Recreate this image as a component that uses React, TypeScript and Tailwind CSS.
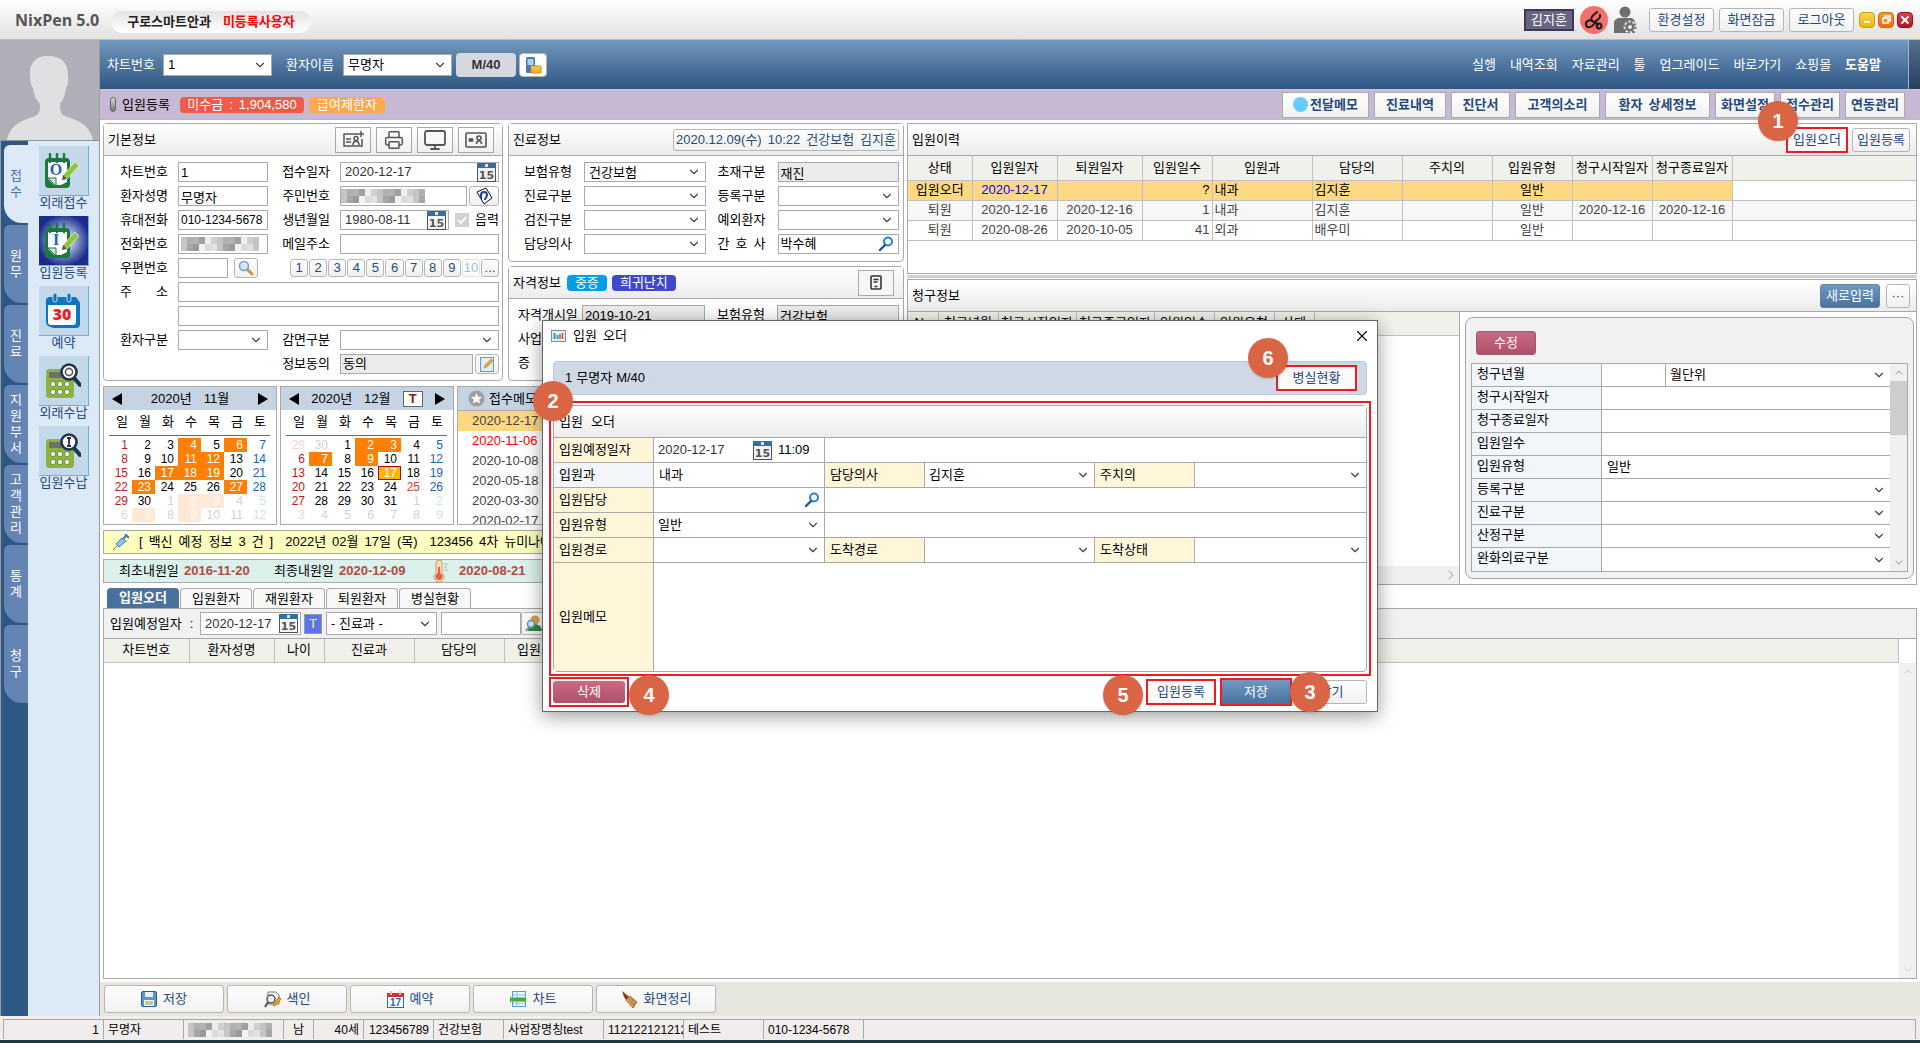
import { useId } from "react";
import type { ReactNode } from "react";
import { ChevronDown, ChevronRight, ChevronUp, Monitor, Printer, X } from "lucide-react";

const MOSAIC = ["#c4c4c4", "#9a9a9a", "#cfcfcf", "#a6a6a6", "#ededed", "#c6c6c6", "#a0a0a0", "#e2e2e2", "#b2b2b2", "#dadada", "#b0b0b0", "#f2f2f2"];

const SIDE_TABS = ["접수", "원무", "진료", "지원부서", "고객관리", "통계", "청구"];
const TOP_MENU = ["실행", "내역조회", "자료관리", "툴", "업그레이드", "바로가기", "쇼핑몰"];
const WEEK = ["일", "월", "화", "수", "목", "금", "토"];
const MEMO_DATES = ["2020-12-17", "2020-11-06", "2020-10-08", "2020-05-18", "2020-03-30", "2020-02-17"];

const HISTORY = [
    ["입원오더", "2020-12-17", "", "?", "내과", "김지훈", "", "일반", "", ""],
    ["퇴원", "2020-12-16", "2020-12-16", "1", "내과", "김지훈", "", "일반", "2020-12-16", "2020-12-16"],
    ["퇴원", "2020-08-26", "2020-10-05", "41", "외과", "배우미", "", "일반", "", ""],
];

const HISTORY_COLS = [
    { name: "상태", w: "w-[64px]" },
    { name: "입원일자", w: "w-[85px]" },
    { name: "퇴원일자", w: "w-[85px]" },
    { name: "입원일수", w: "w-[70px]" },
    { name: "입원과", w: "w-[100px]" },
    { name: "담당의", w: "w-[90px]" },
    { name: "주치의", w: "w-[90px]" },
    { name: "입원유형", w: "w-[80px]" },
    { name: "청구시작일자", w: "w-[80px]" },
    { name: "청구종료일자", w: "w-[80px]" },
];

const CLAIM_COLS = [
    { name: "No", w: "w-[30px]" },
    { name: "청구년월", w: "w-[60px]" },
    { name: "청구시작일자", w: "w-[78px]" },
    { name: "청구종료일자", w: "w-[78px]" },
    { name: "입원일수", w: "w-[60px]" },
    { name: "입원유형", w: "w-[60px]" },
    { name: "상태", w: "w-[40px]" },
];

const ORDER_COLS = [
    { name: "차트번호", w: "w-[85px]" },
    { name: "환자성명", w: "w-[85px]" },
    { name: "나이", w: "w-[50px]" },
    { name: "진료과", w: "w-[90px]" },
    { name: "담당의", w: "w-[90px]" },
    { name: "입원오더", w: "w-[74px]" },
];

function Mosaic({ count }: { count: number }) {
    return (
        <svg width={count * 6} height="14" className="shrink-0">
            {Array.from({ length: count * 2 }, (_, i) => (
                <rect key={i} x={Math.floor(i / 2) * 6} y={(i % 2) * 7} width="6" height="7" fill={MOSAIC[(i * 5) % 12]} />
            ))}
        </svg>
    );
}

function DateIcon() {
    return (
        <svg width="19" height="19" viewBox="0 0 19 19">
            <rect x="0.5" y="0.5" width="18" height="18" fill="#f4f4f4" stroke="#4a5560" />
            <rect x="0" y="0" width="19" height="5" fill="#2e6fa8" />
            <rect x="8" y="1" width="3" height="3" fill="#d8ecff" />
            <text x="9.5" y="16" textAnchor="middle" fontSize="11" fontWeight="700" fill="#555" fontFamily="DejaVu Sans">15</text>
        </svg>
    );
}

function Lens({ size = 16 }: { size?: number }) {
    return (
        <svg width={size} height={size} viewBox="0 0 16 16" fill="none">
            <circle cx="10" cy="5.5" r="4" stroke="#2f7fc4" strokeWidth="2" fill="#eaf5ff" />
            <path d="M7 9L2 14" stroke="#1f4f9a" strokeWidth="2.4" strokeLinecap="round" />
        </svg>
    );
}

function Field({ label, value = "", gray = false, small = false }: { label: ReactNode; value?: string; gray?: boolean; small?: boolean }) {
    const id = useId();
    return (
        <>
            <label htmlFor={id}>{label}</label>
            <div className={`flex h-5 min-w-0 items-center border border-[#a9a9a9] ${gray ? "bg-[#ebebeb]" : "bg-white"}`}>
                <input id={id} defaultValue={value} readOnly={gray} className={`h-full w-full min-w-0 px-0.5 outline-none ${small ? "text-xs" : ""}`} />
            </div>
        </>
    );
}

function DateBox({ id, value }: { id: string; value: string }) {
    return (
        <div className="flex h-full min-w-0 flex-1 items-center border border-[#a9a9a9] bg-white pl-1">
            <input id={id} defaultValue={value} className="w-full min-w-0 text-[#333] outline-none" />
            <button aria-label="달력" className="mr-0.5 shrink-0"><DateIcon /></button>
        </div>
    );
}

function SelectBox({ id, value = "", name, border = true }: { id?: string; value?: string; name?: string; border?: boolean }) {
    return (
        <div className={`relative h-full min-w-0 flex-1 bg-white ${border ? "border border-[#a9a9a9]" : ""}`}>
            <select id={id} aria-label={name} className="h-full w-full appearance-none bg-transparent pl-1 outline-none">
                <option>{value}</option>
            </select>
            <ChevronDown className="pointer-events-none absolute right-1 top-1/2 h-3.5 w-3.5 -translate-y-1/2 text-[#444]" />
        </div>
    );
}

function SelectField({ label, value }: { label: string; value?: string }) {
    const id = useId();
    return (
        <>
            <label htmlFor={id}>{label}</label>
            <div className="flex h-5 min-w-0"><SelectBox id={id} value={value} /></div>
        </>
    );
}

function PanelHead({ title, children }: { title: string; children?: ReactNode }) {
    return (
        <div className="flex h-8 shrink-0 items-center border-b border-[#a9a9a9] bg-linear-to-b from-white to-[#ececec] pl-1">
            <h2>{title}</h2>
            {children}
        </div>
    );
}

function Marker({ n, place }: { n: number; place: string }) {
    return (
        <span className={`absolute z-20 flex h-10 w-10 items-center justify-center rounded-full bg-[#d96544] text-xl font-bold text-white shadow-sm ${place}`}>
            {n}
        </span>
    );
}

function PlainButton({ children, label, className = "" }: { children: ReactNode; label?: string; className?: string }) {
    return (
        <button aria-label={label} className={`flex items-center justify-center whitespace-nowrap rounded-[3px] border border-[#b5b5b5] bg-linear-to-b from-white to-[#f0f0f0] text-[#24497c] ${className}`}>
            {children}
        </button>
    );
}

function SideIcon({ kind }: { kind: string }) {
    if (kind === "30") {
        return (
            <svg width="36" height="36" viewBox="0 0 36 36">
                <rect x="5" y="7" width="30" height="28" rx="4" fill="#0b76bd" />
                <rect x="2" y="5" width="30" height="28" rx="4" fill="#fff" stroke="#0b76bd" strokeWidth="2" />
                <path d="M1 12V8a4 4 0 0 1 4-4h24a4 4 0 0 1 4 4v4z" fill="#0b76bd" />
                <rect x="8" y="0" width="4" height="9" rx="2" fill="#0b76bd" stroke="#c5d9ea" />
                <rect x="22" y="0" width="4" height="9" rx="2" fill="#0b76bd" stroke="#c5d9ea" />
                <text x="17" y="27" textAnchor="middle" fontSize="16" fontWeight="800" fill="#ee1c25" fontFamily="Open Sans">30</text>
            </svg>
        );
    }
    if (kind === "calcO" || kind === "calcI") {
        return (
            <svg width="36" height="36" viewBox="0 0 36 36">
                <rect x="1" y="6" width="28" height="29" rx="3" fill="#8cb43c" />
                <rect x="4" y="9" width="18" height="6" fill="#6d6e71" />
                {[8, 15, 22].map((x) => (
                    <g key={x} fill="#fff" stroke="#55752a" strokeWidth="0.8">
                        <circle cx={x} cy="21" r="2.6" />
                        <circle cx={x} cy="29" r="2.6" />
                    </g>
                ))}
                <path d="M29 15L35 22" stroke="#1e3550" strokeWidth="4" strokeLinecap="round" />
                <circle cx="24" cy="9" r="7.5" fill="#fff" stroke="#1e3550" strokeWidth="2.6" />
                {kind === "calcO" ? <circle cx="24" cy="9" r="3.6" fill="none" stroke="#555" strokeWidth="1.6" /> : <path d="M22 5h4M24 5v8M22 13h4" stroke="#333" strokeWidth="1.8" />}
            </svg>
        );
    }
    return (
        <svg width="38" height="36" viewBox="0 0 38 36">
            <rect x="1" y="5" width="25" height="30" rx="4" fill="#1a7a3c" />
            <path d="M4 9h19v20l-6 3H10l-6-6z" fill="#fff" />
            <path d="M4 25l8 8V25z" fill="#cfe6d5" stroke="#1a7a3c" />
            {[6, 13, 20].map((x) => <path key={x} d={`M${x} 1v8`} stroke="#1a7a3c" strokeWidth="2.4" strokeLinecap="round" />)}
            <path d="M19 22L31 9l4 4L23 26l-5 1z" fill="#8dc63f" stroke="#fff" strokeWidth="0.6" />
            <path d="M19 22l4 4-5 1z" fill="#555" />
            <text x="12" y="22" textAnchor="middle" fontSize="16" fontWeight="700" fill="#1c63b7" fontFamily="Liberation Serif">{kind}</text>
        </svg>
    );
}

const SIDE_ICONS = [
    { label: "외래접수", kind: "O" },
    { label: "입원등록", kind: "I" },
    { label: "예약", kind: "30" },
    { label: "외래수납", kind: "calcO" },
    { label: "입원수납", kind: "calcI" },
];

function TitleBar() {
    return (
        <header className="flex h-10 items-center border-b border-[#bdbdbd] bg-linear-to-b from-white to-[#e3e1de] px-[7px]">
            <h1 className="pl-2 font-['Open_Sans',sans-serif] text-base font-bold text-[#55555a]">NixPen 5.0</h1>
            <div className="ml-3 mt-1 flex h-[22px] items-center gap-3 rounded-full bg-linear-to-b from-[#e6e3e2] to-white px-4 font-bold">
                <span className="text-[#222]">구로스마트안과</span>
                <span className="text-[#f00]">미등록사용자</span>
            </div>
            <div className="ml-auto flex items-center gap-[5px]">
                <span className="flex h-[22px] w-[50px] items-center justify-center border-2 border-[#3c3859] bg-[#686580] text-white">김지훈</span>
                <svg width="28" height="28" viewBox="0 0 28 28" className="ml-px">
                    <circle cx="14" cy="14" r="14" fill="#f4706c" />
                    <g fill="none" stroke="#1c1c1c" strokeWidth="2" strokeLinecap="round">
                        <path d="M17 6l-1 1c-3 2-6 5-4 8 2 2 6-1 8-4l0-2" />
                        <path d="M12 15c-3-2-7 1-6 4 1 4 6 2 8-1 2-2 3-1 4 1" />
                        <circle cx="19" cy="20" r="2.4" />
                    </g>
                </svg>
                <svg width="24" height="28" viewBox="0 0 24 28">
                    <circle cx="12" cy="6" r="5.5" fill="#6e6e6e" />
                    <path d="M1 27V17c0-3 3-5 6-5h10c3 0 5 2 5 5v10z" fill="#6e6e6e" />
                    <circle cx="17" cy="21" r="6.500" fill="#ebeae8" />
                    <circle cx="17" cy="21" r="5.500" fill="none" stroke="#6e6e6e" strokeWidth="2" strokeDasharray="2 2.300" />
                    <circle cx="17" cy="21" r="3.300" fill="none" stroke="#6e6e6e" strokeWidth="2.400" />
                </svg>
                <PlainButton className="ml-[7px] h-6 w-[65px]">환경설정</PlainButton>
                <PlainButton className="h-6 w-[65px]">화면잠금</PlainButton>
                <PlainButton className="h-6 w-[65px]">로그아웃</PlainButton>
                <div className="flex gap-[3px]">
                    <button aria-label="최소화" className="flex h-4 w-4 items-end justify-center rounded-sm border border-[#c8a014] bg-linear-to-b from-[#f2d64b] to-[#f5b400] pb-1"><span className="h-0.5 w-1.5 bg-white" /></button>
                    <button aria-label="이전 크기" className="flex h-4 w-4 items-center justify-center rounded-sm border border-[#c46a10] bg-linear-to-b from-[#f29a3b] to-[#f26a00]">
                        <svg width="9" height="9" viewBox="0 0 9 9" fill="none" stroke="#fff" strokeWidth="1.500"><path d="M3 3V1h5v5H6" /><rect x="1" y="3" width="5" height="5" /></svg>
                    </button>
                    <button aria-label="종료" className="flex h-4 w-4 items-center justify-center rounded-sm border border-[#8e1420] bg-linear-to-b from-[#d94450] to-[#b8101f] text-white"><X className="h-3 w-3" strokeWidth={4} /></button>
                </div>
            </div>
        </header>
    );
}

function Sidebar() {
    return (
        <aside className="flex w-[100px] shrink-0 flex-col border-r border-[#9b9ba0] bg-[#dce9f6]">
            <svg viewBox="0 0 99 100" className="w-full border-b border-[#909095] bg-[#afafb7]">
                <path d="M47 16c-12 0-18 8-17 20 0 6 1 9 3 12 1 9 4 13 7 16 0 8-1 10-5 12-14 5-25 9-28 24h86c-3-15-14-19-28-24-4-2-5-4-5-12 3-4 5-8 6-16 2-3 3-7 2-12 0-12-5-20-21-20z" fill="#e0e0e2" />
            </svg>
            <div className="flex flex-1">
                <nav className="flex w-7 flex-col gap-0.5 border-l border-[#9a9a9a] bg-[#2f5784] pl-[3px] pt-1">
                    {SIDE_TABS.map((tab, i) => (
                        <button
                            key={tab}
                            className={`flex h-[78px] items-center justify-center rounded-bl-[18px] rounded-tl-md ${i === 0 ? "bg-[#dce9f6] text-[#4a77ac]" : "bg-[#6484b3] text-white"}`}
                        >
                            <span className="w-[13px] break-all leading-4">{tab}</span>
                        </button>
                    ))}
                </nav>
                <div className="flex flex-1 flex-col items-center pt-[5px]">
                    {SIDE_ICONS.map((item, i) => (
                        <button key={item.label} className="flex h-[70px] w-[54px] flex-col items-center text-[#24497c]">
                            <span className={`flex h-[50px] w-[50px] items-center justify-center border-b border-r border-[#6db0e0] ${i === 1 ? "bg-radial from-[#eef0ff] from-10% to-[#1d2a8c] to-75%" : "bg-[#c3d9ea]"}`}>
                                <SideIcon kind={item.kind} />
                            </span>
                            <span className="leading-[14px]">{item.label}</span>
                        </button>
                    ))}
                </div>
            </div>
        </aside>
    );
}

function PatientBar() {
    return (
        <div className="flex h-[50px] items-center border-b border-[#c9c9d4] bg-linear-to-b from-[#7399bf] to-[#2f5583] pl-[7px] text-white">
            <label htmlFor="top-chart" className="w-14">차트번호</label>
            <div className="flex h-[22px] w-[109px] text-black"><SelectBox id="top-chart" value="1" /></div>
            <label htmlFor="top-name" className="ml-[14px] w-[57px]">환자이름</label>
            <div className="flex h-[22px] w-[109px] text-black"><SelectBox id="top-name" value="무명자" /></div>
            <span className="ml-1 flex h-6 w-[60px] items-center justify-center rounded-sm bg-[#d5d8df] font-bold text-[#333]">M/40</span>
            <button aria-label="문자 전송" className="ml-[3px] flex h-6 w-7 items-center justify-center rounded-sm border border-[#b5b5b5] bg-white">
                <svg width="18" height="18" viewBox="0 0 18 18">
                    <rect x="2" y="1" width="9" height="16" rx="1.500" fill="#4a78b0" />
                    <rect x="3.500" y="3" width="6" height="6" fill="#a9d3f5" />
                    <rect x="7" y="10" width="10" height="7" fill="#f9b52c" stroke="#d98e0d" />
                    <path d="M7 10l5 3 5-3" fill="none" stroke="#fbd98a" />
                </svg>
            </button>
            <nav className="ml-auto flex gap-[14px] pr-[27px]">
                {TOP_MENU.map((m) => <a key={m} href="#">{m}</a>)}
                <a href="#" className="font-bold">도움말</a>
            </nav>
            <span className="h-full w-3 border-l border-[#9fb4cc] bg-linear-to-b from-[#56718d] to-[#24405f]" />
        </div>
    );
}

function StatusRow() {
    const btn = "flex h-[26px] items-center justify-center whitespace-nowrap border border-[#a9a9a9] bg-linear-to-b from-white to-[#f0f0f0] font-bold text-[#24497c]";
    return (
        <div className="flex h-[30px] items-center border-b border-[#c0b4c6] bg-[#c7b8d4] pl-[10px] pr-[15px]">
            <span className="h-[15px] w-1.5 rounded-full border border-[#666] bg-linear-to-b from-[#ddd] to-[#777]" />
            <span className="ml-1.5 w-[58px]">입원등록</span>
            <span className="flex h-4 w-[124px] items-center justify-center gap-1.5 rounded-sm bg-[#ee5b49] text-white"><span>미수금</span><span>:</span><span>1,904,580</span></span>
            <span className="ml-[5px] flex h-4 w-[76px] items-center justify-center rounded-sm bg-[#fea94b] text-white">급여제한자</span>
            <div className="ml-auto flex gap-[5px]">
                <button className={`${btn} w-[87px] gap-0.5`}><span className="h-[15px] w-[15px] rounded-full bg-[#64ccff]" />전달메모</button>
                <button className={`${btn} w-[72px]`}>진료내역</button>
                <button className={`${btn} w-[59px]`}>진단서</button>
                <button className={`${btn} w-[85px]`}>고객의소리</button>
                <button className={`${btn} w-[105px] gap-1.5`}><span>환자</span><span>상세정보</span></button>
                <button className={`${btn} w-[60px]`}>화면설정</button>
                <button className={`${btn} w-[60px]`}>접수관리</button>
                <button className={`${btn} w-[60px]`}>연동관리</button>
            </div>
        </div>
    );
}

function BasicInfo() {
    const tool = "flex h-[26px] w-9 items-center justify-center border border-[#a9a9a9] bg-linear-to-b from-white to-[#f0f0f0] text-[#555]";
    return (
        <section className="w-[400px] shrink-0 rounded-sm border border-[#a9a9a9] bg-white">
            <PanelHead title="기본정보">
                <div className="ml-auto flex gap-[5px] pr-2">
                    <button aria-label="환자 추가" className={tool}>
                        <svg width="22" height="20" viewBox="0 0 22 20" fill="none" stroke="currentColor" strokeWidth="1.500"><path d="M16 4H2v12h18V9M4 9h5M4 12h5M19 1v6M16 4h6" /><circle cx="14" cy="8.500" r="2" /><path d="M11 15c0-5 6-5 6 0" /></svg>
                    </button>
                    <button aria-label="인쇄" className={tool}><Printer className="h-5 w-5" strokeWidth={1.8} /></button>
                    <button aria-label="모니터" className={tool}><Monitor className="h-6 w-6" strokeWidth={1.8} /></button>
                    <button aria-label="신분증" className={tool}>
                        <svg width="22" height="18" viewBox="0 0 22 18" fill="none" stroke="currentColor" strokeWidth="1.600"><rect x="1" y="2" width="20" height="14" rx="1" /><rect x="4.500" y="8" width="3" height="2" fill="currentColor" /><circle cx="14" cy="7" r="2" /><path d="M11.500 13c0-4 5-4 5 0" /></svg>
                    </button>
                </div>
            </PanelHead>
            <div className="grid grid-cols-[48px_90px_52px_minmax(0,1fr)] gap-x-2.5 gap-y-1 whitespace-nowrap pb-1.5 pl-4 pr-[3px] pt-1.5 [&>label]:text-right">
                <Field label="차트번호" value="1" />
                <label htmlFor="recv-date">접수일자</label>
                <div className="flex h-5"><DateBox id="recv-date" value="2020-12-17" /></div>

                <Field label="환자성명" value="무명자" />
                <span className="text-right">주민번호</span>
                <div className="flex h-5 gap-0.5">
                    <div className="flex min-w-0 flex-1 items-center border border-[#a9a9a9] bg-white"><Mosaic count={14} /></div>
                    <PlainButton label="주민번호 조회" className="w-[30px]">
                        <svg width="18" height="18" viewBox="0 0 18 18"><path d="M2 5l9-4 6 10-8 6z" fill="#f2f6ff" stroke="#111" /><path d="M6 12V8a3 3 0 0 1 6 0c0 2-2 3-2 5" fill="none" stroke="#1d3fa0" strokeWidth="2" /></svg>
                    </PlainButton>
                </div>

                <Field label="휴대전화" value="010-1234-5678" small />
                <label htmlFor="birth">생년월일</label>
                <div className="flex h-5 items-center gap-1.5">
                    <DateBox id="birth" value="1980-08-11" />
                    <label className="flex items-center gap-1.5">
                        <span className="relative flex h-3.5 w-3.5">
                            <input type="checkbox" defaultChecked disabled className="h-3.5 w-3.5 appearance-none bg-[#d2d2d2]" />
                            <svg viewBox="0 0 14 14" className="pointer-events-none absolute inset-0 h-3.5 w-3.5" fill="none" stroke="#fff" strokeWidth="1.800"><path d="M3 7l3 3 5-6" /></svg>
                        </span>
                        음력
                    </label>
                </div>

                <span className="text-right">전화번호</span>
                <div className="flex h-5 items-center border border-[#a9a9a9] bg-white pl-0.5"><Mosaic count={13} /></div>
                <Field label="메일주소" />

                <label htmlFor="zip">우편번호</label>
                <div className="flex h-5 gap-1.5">
                    <input id="zip" className="h-5 w-[50px] border border-[#a9a9a9] bg-white" />
                    <PlainButton label="우편번호 검색" className="w-6">
                        <svg width="16" height="16" viewBox="0 0 16 16"><path d="M9 9l5 5" stroke="#e0922c" strokeWidth="3" strokeLinecap="round" /><circle cx="6" cy="6" r="4.500" fill="#cfe8fb" stroke="#7f9fc0" strokeWidth="1.600" /></svg>
                    </PlainButton>
                </div>
                <div className="col-span-2 flex h-5 items-center gap-px pl-3">
                    {["1", "2", "3", "4", "5", "6", "7", "8", "9", "10", "..."].map((n) => (
                        <PlainButton key={n} className={`h-[18px] min-w-0 flex-1 ${n === "10" ? "opacity-40" : ""}`}>{n}</PlainButton>
                    ))}
                </div>

                <label htmlFor="addr1" className="flex justify-between"><span>주</span><span>소</span></label>
                <input id="addr1" className="col-span-3 h-5 border border-[#a9a9a9] bg-white" />
                <span />
                <input aria-label="상세 주소" className="col-span-3 h-5 border border-[#a9a9a9] bg-white" />

                <SelectField label="환자구분" />
                <SelectField label="감면구분" />

                <label htmlFor="agree" className="col-start-3">정보동의</label>
                <div className="flex h-5 gap-0.5">
                    <input id="agree" readOnly defaultValue="동의" className="min-w-0 flex-1 border border-[#a9a9a9] bg-[#ebebeb] px-0.5" />
                    <PlainButton label="동의 수정" className="w-6">
                        <svg width="14" height="15" viewBox="0 0 14 15"><rect x="0.5" y="0.5" width="13" height="14" fill="#dceeff" stroke="#5a9bd5" /><path d="M4 11l1-3 6-6 2 2-6 6z" fill="#f7a823" stroke="#c57a12" strokeWidth="0.600" /></svg>
                    </PlainButton>
                </div>
            </div>
        </section>
    );
}

function MedicalInfo() {
    return (
        <div className="flex w-[396px] shrink-0 flex-col gap-1">
            <section className="rounded-sm border border-[#a9a9a9] bg-white">
                <PanelHead title="진료정보">
                    <PlainButton className="ml-auto mr-1 h-[22px] w-[226px] gap-1.5"><span>2020.12.09(수)</span><span>10:22</span><span>건강보험</span><span>김지훈</span></PlainButton>
                </PanelHead>
                <div className="grid grid-cols-[48px_minmax(0,1fr)_48px_minmax(0,1fr)] gap-x-3 gap-y-1 whitespace-nowrap pb-[7px] pl-[15px] pr-1 pt-1.5">
                    <SelectField label="보험유형" value="건강보험" />
                    <Field label="초재구분" value="재진" gray />
                    <SelectField label="진료구분" />
                    <SelectField label="등록구분" />
                    <SelectField label="검진구분" />
                    <SelectField label="예외환자" />
                    <SelectField label="담당의사" />
                    <label htmlFor="nurse" className="flex justify-between"><span>간</span><span>호</span><span>사</span></label>
                    <div className="flex h-5 items-center border border-[#a9a9a9]">
                        <input id="nurse" defaultValue="박수혜" className="w-full min-w-0 px-0.5 outline-none" />
                        <button aria-label="간호사 검색" className="mr-1"><Lens /></button>
                    </div>
                </div>
            </section>
            <section className="flex-1 rounded-sm border border-[#a9a9a9] bg-white">
                <PanelHead title="자격정보">
                    <span className="ml-1.5 flex h-4 w-10 items-center justify-center rounded-sm bg-[#009fe8] text-white">중증</span>
                    <span className="ml-[5px] flex h-4 w-16 items-center justify-center rounded-sm bg-[#3f48cc] text-white">희귀난치</span>
                    <button aria-label="자격 조회" className="ml-auto mr-[9px] flex h-[26px] w-9 items-center justify-center border border-[#a9a9a9] bg-[#f6f6f6]">
                        <svg width="12" height="15" viewBox="0 0 12 15" fill="none" stroke="#333" strokeWidth="1.600"><rect x="1" y="1" width="10" height="13" rx="1" /><path d="M3.500 4.500h5M3.500 7h4M4.500 11.500h3" /></svg>
                    </button>
                </PanelHead>
                <div className="flex gap-3 whitespace-nowrap pl-[9px] pr-1 pt-1.5">
                    <div className="grid flex-1 grid-cols-[60px_minmax(0,1fr)] content-start gap-x-1 gap-y-1">
                        <Field label="자격개시일" value="2019-10-21" gray />
                        <Field label="사업장명칭" gray />
                        <Field label={<span className="flex justify-between"><span>증</span><span>번</span><span>호</span></span>} gray />
                    </div>
                    <div className="grid w-[182px] grid-cols-[48px_minmax(0,1fr)] content-start gap-x-3 gap-y-1">
                        <Field label="보험유형" value="건강보험" gray />
                    </div>
                </div>
            </section>
        </div>
    );
}

type Month = { title: string; today?: string; weeks: string[][]; picked: string[]; faded: string[] };

// keys in picked / faded are "row-column" of the month grid
const NOVEMBER: Month = {
    title: "11월",
    weeks: [
        ["1", "2", "3", "4", "5", "6", "7"],
        ["8", "9", "10", "11", "12", "13", "14"],
        ["15", "16", "17", "18", "19", "20", "21"],
        ["22", "23", "24", "25", "26", "27", "28"],
        ["29", "30", "1", "2", "3", "4", "5"],
        ["6", "7", "8", "9", "10", "11", "12"],
    ],
    picked: ["0-3", "0-5", "1-3", "1-4", "2-2", "2-3", "2-4", "3-1", "3-5", "4-3", "4-4", "5-1", "5-3"],
    faded: ["4-2", "4-3", "4-4", "4-5", "4-6", "5-0", "5-1", "5-2", "5-3", "5-4", "5-5", "5-6"],
};

const DECEMBER: Month = {
    title: "12월",
    today: "2-4",
    weeks: [
        ["29", "30", "1", "2", "3", "4", "5"],
        ["6", "7", "8", "9", "10", "11", "12"],
        ["13", "14", "15", "16", "17", "18", "19"],
        ["20", "21", "22", "23", "24", "25", "26"],
        ["27", "28", "29", "30", "31", "1", "2"],
        ["3", "4", "5", "6", "7", "8", "9"],
    ],
    picked: ["0-3", "0-4", "1-1", "1-3"],
    faded: ["0-0", "0-1", "4-5", "4-6", "5-0", "5-1", "5-2", "5-3", "5-4", "5-5", "5-6"],
};

function dayClass(m: Month, key: string, col: number) {
    if (m.today === key) return "bg-[#ffb400] text-white outline outline-1 -outline-offset-1 outline-[#a01010]";
    const faded = m.faded.includes(key);
    if (m.picked.includes(key)) return faded ? "bg-[#ffe9d6] text-white" : "bg-[#ff8000] text-white";
    if (m === DECEMBER && key === "3-5") return "text-[#d8401c]";
    if (col === 0) return faded ? "text-[#f5d3d3]" : "text-[#c01818]";
    if (col === 6) return faded ? "text-[#cfe2f3]" : "text-[#1565b0]";
    return faded ? "text-[#d2d2d2]" : "text-black";
}

function Calendar({ month }: { month: Month }) {
    return (
        <section className="h-[139px] w-[174px] border border-[#a9a9a9] bg-white">
            <div className="flex h-[23px] items-center justify-between bg-[#c6d3e2] px-2">
                <button aria-label="이전 달" className="h-0 w-0 border-y-6 border-r-10 border-y-transparent border-r-black" />
                <div className="flex gap-3"><span>2020년</span><span>{month.title}</span></div>
                {month.today && <button className="h-4 w-5 border border-[#666] bg-white font-bold leading-[14px] text-[#7a1a1a]">T</button>}
                <button aria-label="다음 달" className="h-0 w-0 border-y-6 border-l-10 border-y-transparent border-l-black" />
            </div>
            <table className="mx-[5px] w-[161px] table-fixed border-collapse text-right text-xs leading-[14px]">
                <thead>
                    <tr className="h-[25px] border-b border-[#666] text-[13px]">{WEEK.map((d) => <th key={d} className="p-0 pr-1 font-normal">{d}</th>)}</tr>
                </thead>
                <tbody>
                    <tr className="h-[3px]"><td colSpan={7} className="h-[3px] p-0" /></tr>
                    {month.weeks.map((week, r) => (
                        <tr key={r} className="h-[14px]">
                            {week.map((d, c) => <td key={c} className={`h-[14px] p-0 pr-1 ${dayClass(month, `${r}-${c}`, c)}`}>{d}</td>)}
                        </tr>
                    ))}
                </tbody>
            </table>
        </section>
    );
}

function Memos() {
    return (
        <section className="h-[139px] flex-1 overflow-hidden border border-[#a9a9a9] bg-white">
            <div className="flex h-6 items-center gap-1 border-b border-[#a9a9a9] bg-[#c6d3e2] pl-2.5">
                <svg width="17" height="17" viewBox="0 0 17 17"><circle cx="8.500" cy="8.500" r="8" fill="#a0a0a0" /><path d="M8.500 3l1.600 3.700 4 .3-3 2.600.9 3.900-3.500-2.100L5 13.500l.9-3.900-3-2.600 4-.3z" fill="#fff" /></svg>
                접수메모
            </div>
            <ul className="text-[#444]">
                {MEMO_DATES.map((d, i) => (
                    <li key={d} className={`h-5 pl-[14px] leading-5 ${i === 0 ? "bg-[#fdd87f]" : ""} ${i === 1 ? "text-[#f00]" : ""}`}>{d}</li>
                ))}
            </ul>
        </section>
    );
}

function Notices() {
    return (
        <>
            <div className="flex h-6 items-center gap-1.5 overflow-hidden whitespace-nowrap border border-[#a9a9a9] bg-[#fefebe] pl-2">
                <svg width="17" height="17" viewBox="0 0 17 17"><path d="M1 16l4-4" stroke="#777" /><path d="M4 10l6-6 4 3-7 6z" fill="#8cc4ee" stroke="#3b7fb5" /><path d="M11 5l4-4M13 0l4 4" stroke="#3b7fb5" strokeWidth="2" /></svg>
                <span className="ml-1">[</span><span>백신</span><span>예정</span><span>정보</span><span>3</span><span>건</span><span>]</span>
                <span className="ml-1.5">2022년</span><span>02월</span><span>17일</span><span>(목)</span>
                <span className="ml-1.5">123456</span><span>4차</span><span>뉴미나에프</span>
            </div>
            <div className="flex h-6 items-center border border-[#a9a9a9] bg-[#dcf1ec] pl-[15px]">
                <span className="w-[65px]">최초내원일</span><b className="w-[90px] text-[#b04a42]">2016-11-20</b>
                <span className="w-[65px]">최종내원일</span><b className="w-[92px] text-[#b04a42]">2020-12-09</b>
                <svg width="18" height="22" viewBox="0 0 18 22"><path d="M5 3a3 3 0 0 1 6 0v10a5 5 0 1 1-6 0z" fill="#f8dfae" stroke="#c8a06a" /><circle cx="8" cy="16.500" r="3.500" fill="#e8604c" /><path d="M8 7v9" stroke="#e8604c" strokeWidth="2" /><path d="M13 4h4M13 7h3M13 10h4" stroke="#b5b5b5" /></svg>
                <b className="ml-2.5 text-[#b04a42]">2020-08-21</b>
            </div>
        </>
    );
}

function History() {
    const align = (i: number) => (i === 3 ? "text-right pr-0.5" : i === 4 || i === 5 ? "text-left pl-0.5" : "text-center");
    return (
        <section className="relative h-[151px] border border-[#a9a9a9] bg-white">
            <PanelHead title="입원이력">
                <div className="ml-auto flex items-center gap-1 pr-1.5">
                    <button className="h-[26px] w-[62px] border-2 border-[#ed1c24] bg-[#fafafa] text-[#24497c]">입원오더</button>
                    <PlainButton className="h-6 w-[58px]">입원등록</PlainButton>
                </div>
            </PanelHead>
            <Marker n={1} place="right-[118px] -top-[23px]" />
            <table className="w-full table-fixed border-collapse whitespace-nowrap">
                <thead>
                    <tr className="h-6 bg-[#f0f1ea]">
                        {HISTORY_COLS.map((c) => <th key={c.name} className={`${c.w} border-b border-r border-[#c0c0c0] p-0 font-normal`}>{c.name}</th>)}
                        <th className="border-b border-[#c0c0c0]" />
                    </tr>
                </thead>
                <tbody>
                    {HISTORY.map((row, r) => (
                        <tr key={r} className={`h-5 leading-[18px] ${r === 0 ? "" : "text-[#444]"} ${r === 1 ? "bg-[#f7f7f7]" : ""}`}>
                            {row.map((v, i) => (
                                <td key={i} className={`border-b border-r border-[#c0c0c0] p-0 ${align(i)} ${r === 0 ? "bg-[#fed983]" : ""} ${r === 0 && i === 1 ? "text-[#00f]" : ""}`}>{v}</td>
                            ))}
                            <td className="border-b border-[#c0c0c0]" />
                        </tr>
                    ))}
                </tbody>
            </table>
        </section>
    );
}

function ClaimRow({ label, value = "", select = false }: { label: string; value?: string; select?: boolean }) {
    const id = useId();
    return (
        <div className="flex h-[23px] border-b border-[#a9a9a9] last:border-b-0">
            <label htmlFor={id} className="w-[130px] border-r border-[#a9a9a9] bg-[#f2f6fa] pl-[5px]">{label}</label>
            {select ? <SelectBox id={id} border={false} /> : <input id={id} defaultValue={value} className="min-w-0 flex-1 bg-white pl-[5px]" />}
        </div>
    );
}

function Claims() {
    return (
        <section className="flex flex-1 flex-col border border-[#a9a9a9] bg-white">
            <PanelHead title="청구정보">
                <div className="ml-auto flex gap-1.5 pr-1.5">
                    <button className="h-6 w-[60px] rounded-[3px] border border-[#6b7f96] bg-linear-to-b from-[#7099c0] to-[#4a729e] text-white">새로입력</button>
                    <PlainButton className="h-6 w-6">···</PlainButton>
                </div>
            </PanelHead>
            <div className="flex flex-1">
                <div className="flex flex-1 flex-col border-r border-[#a9a9a9]">
                    <table className="w-full table-fixed border-collapse whitespace-nowrap">
                        <thead>
                            <tr className="h-[23px] bg-[#f0f1ea]">
                                {CLAIM_COLS.map((c) => <th key={c.name} className={`${c.w} border-b border-r border-[#c0c0c0] p-0 font-normal`}>{c.name}</th>)}
                                <th className="border-b border-[#c0c0c0]" />
                            </tr>
                        </thead>
                    </table>
                    <div className="mt-auto flex h-[18px] items-center justify-end bg-[#f0f0f0] text-[#bbb]"><ChevronRight className="h-4 w-4" /></div>
                </div>
                <div className="w-[456px] p-[5px] pr-0.5">
                    <div className="h-full rounded-lg border border-[#a4a4b0] bg-[#f1f1f1] px-[5px] pb-1.5 pt-[13px]">
                        <button className="ml-[5px] h-6 w-[60px] rounded-[3px] border border-[#8e6070] bg-linear-to-b from-[#c96b86] to-[#b04f6c] text-white">수정</button>
                        <div className="mt-2 flex border border-[#a9a9a9]">
                            <div className="flex-1">
                                <div className="flex h-[23px] border-b border-[#a9a9a9]">
                                    <label htmlFor="claim-month" className="w-[130px] border-r border-[#a9a9a9] bg-[#f2f6fa] pl-[5px]">청구년월</label>
                                    <input id="claim-month" className="w-[64px] border-r border-[#a9a9a9] bg-white" />
                                    <SelectBox name="청구 단위" value="월단위" border={false} />
                                </div>
                                <ClaimRow label="청구시작일자" />
                                <ClaimRow label="청구종료일자" />
                                <ClaimRow label="입원일수" />
                                <ClaimRow label="입원유형" value="일반" />
                                <ClaimRow label="등록구분" select />
                                <ClaimRow label="진료구분" select />
                                <ClaimRow label="산정구분" select />
                                <ClaimRow label="완화의료구분" select />
                            </div>
                            <div className="flex w-[17px] flex-col items-center bg-[#f0f0f0] text-[#999]">
                                <ChevronUp className="h-[17px] w-3" />
                                <div className="h-[54px] w-full bg-[#cdcdcd]" />
                                <ChevronDown className="mt-auto h-[17px] w-3" />
                            </div>
                        </div>
                    </div>
                </div>
            </div>
        </section>
    );
}

function OrderList() {
    return (
        <section className="flex flex-1 flex-col pt-[3px]">
            <div className="flex h-5 gap-px pl-1">
                {["입원오더", "입원환자", "재원환자", "퇴원환자", "병실현황"].map((t, i) => (
                    <button key={t} className={`w-[72px] rounded-t-sm ${i === 0 ? "bg-[#4a719d] font-bold text-white" : "border border-b-0 border-[#a9a9a9] bg-[#f8f8f8]"}`}>{t}</button>
                ))}
            </div>
            <div className="flex flex-1 flex-col border border-[#a9a9a9] bg-white">
                <div className="flex h-[30px] items-center border-b border-[#a9a9a9] bg-[#f1f1f1] pl-1.5">
                    <label htmlFor="order-date" className="flex w-[90px] gap-2"><span>입원예정일자</span><span>:</span></label>
                    <div className="flex h-[23px] w-[101px]"><DateBox id="order-date" value="2020-12-17" /></div>
                    <button className="ml-[3px] h-5 w-[18px] border border-[#999] bg-[#5b72f2] leading-4 text-[#ff0]">T</button>
                    <div className="ml-1 flex h-[23px] w-[111px]"><SelectBox name="진료과" value="- 진료과 -" /></div>
                    <input aria-label="환자 검색" className="ml-1 h-[23px] w-[80px] border border-[#a9a9a9] bg-white" />
                    <PlainButton label="환자 찾기" className="h-[23px] w-6">
                        <svg width="17" height="17" viewBox="0 0 17 17"><circle cx="10" cy="5" r="4.500" fill="#d9a14a" /><path d="M3 16c0-9 14-9 14 0z" fill="#2f8a3a" /><circle cx="6" cy="9" r="3.500" fill="#cfe8ff" stroke="#6a92b8" strokeWidth="1.500" /><path d="M4 12l-3 4" stroke="#6a92b8" strokeWidth="2" /></svg>
                    </PlainButton>
                </div>
                <div className="pr-[17px]">
                    <table className="w-full table-fixed border-collapse whitespace-nowrap">
                        <thead>
                            <tr className="h-[23px] bg-[#f0f1ea]">
                                {ORDER_COLS.map((c) => <th key={c.name} className={`${c.w} border-b border-r border-[#c0c0c0] p-0 font-normal`}>{c.name}</th>)}
                                <th className="border-b border-r border-[#c0c0c0]" />
                            </tr>
                        </thead>
                    </table>
                </div>
                <div className="flex w-[17px] flex-1 flex-col items-center justify-between self-end bg-[#f0f0f0] text-[#ccc]">
                    <ChevronUp className="h-[17px] w-3" />
                    <ChevronDown className="h-[17px] w-3" />
                </div>
            </div>
        </section>
    );
}

function ActionBar() {
    const btn = "h-[28px] w-[120px] gap-1.5";
    return (
        <div className="flex h-[34px] gap-[3px] bg-[#e6e6de] pl-1 pt-[3px]">
            <PlainButton className={btn}>
                <svg width="16" height="16" viewBox="0 0 16 16"><rect x="0.5" y="0.5" width="15" height="15" rx="1.500" fill="#5e93d8" stroke="#2c5aa0" /><rect x="4" y="1" width="8" height="5" fill="#e9f1fb" /><rect x="3" y="9" width="10" height="6" fill="#f4f8ec" /><path d="M4 11h8M4 13h8" stroke="#79a84b" /></svg>
                저장
            </PlainButton>
            <PlainButton className={btn}>
                <svg width="17" height="17" viewBox="0 0 17 17"><path d="M4 1h8l3 3v9H4z" fill="#fafafa" stroke="#777" /><circle cx="7" cy="8" r="4" fill="#e7eef5" stroke="#555" strokeWidth="1.500" /><path d="M4 11l-3 5" stroke="#555" strokeWidth="2" /><path d="M9 15l1-3 5-6 2 2-5 6z" fill="#f39a1d" stroke="#9b5c0a" strokeWidth="0.600" /></svg>
                색인
            </PlainButton>
            <PlainButton className={btn}>
                <svg width="17" height="17" viewBox="0 0 17 17"><rect x="0.5" y="2.500" width="16" height="14" fill="#fff" stroke="#1e6fb8" /><rect x="0" y="2" width="17" height="4" fill="#dc2a2a" /><path d="M4 0v4M13 0v4" stroke="#f5b5b5" strokeWidth="2" /><text x="8.500" y="15" textAnchor="middle" fontSize="10" fontWeight="700" fill="#1e5fae" fontFamily="Liberation Sans">17</text></svg>
                예약
            </PlainButton>
            <PlainButton className={btn}>
                <svg width="17" height="17" viewBox="0 0 17 17"><rect x="2.500" y="0.5" width="13" height="15" fill="#e9f6ff" stroke="#4d9fd6" /><path d="M3 4h12M7 1v15M3 12h12" stroke="#8cc4ea" /><rect x="3" y="6.500" width="13" height="4" fill="#3fae3a" /><path d="M0 5l3 3.500-3 3.500z" fill="#3fae3a" /></svg>
                차트
            </PlainButton>
            <PlainButton className={btn}>
                <svg width="17" height="17" viewBox="0 0 17 17"><path d="M1 0l5 4 3 3-3 3-3-4z" fill="#8a3b1c" /><path d="M5 9l4-4 7 6-4 6z" fill="#d9a05b" stroke="#8d5c22" strokeWidth="0.800" /><path d="M8 8l5 7M10 7l4 6" stroke="#8d5c22" strokeWidth="0.700" /></svg>
                화면정리
            </PlainButton>
        </div>
    );
}

function StatusBar() {
    const cell = "flex h-5 items-center overflow-hidden whitespace-nowrap border-l border-t border-[#a9a9a9] px-1";
    return (
        <footer className="border-b-[3px] border-[#1f3a40] bg-[#f0edec] pb-px pl-[3px] pr-1 pt-[3px] text-xs">
            <div className="flex border-r border-[#a9a9a9]">
                <span className={`${cell} w-[100px] justify-end`}>1</span>
                <span className={`${cell} w-20`}>무명자</span>
                <span className={`${cell} w-[100px]`}><Mosaic count={14} /></span>
                <span className={`${cell} w-[30px] justify-center`}>남</span>
                <span className={`${cell} w-[50px] justify-end`}>40세</span>
                <span className={`${cell} w-[70px] justify-end`}>123456789</span>
                <span className={`${cell} w-[70px]`}>건강보험</span>
                <span className={`${cell} w-[100px]`}>사업장명칭test</span>
                <span className={`${cell} w-20`}>112122121212</span>
                <span className={`${cell} w-20`}>테스트</span>
                <span className={`${cell} w-[100px]`}>010-1234-5678</span>
                <span className={`${cell} flex-1`} />
            </div>
        </footer>
    );
}

function OrderDialog() {
    const row = "grid h-[25px] grid-cols-[100px_171px_100px_170px_100px_1fr] border-b border-[#a9a9a9]";
    const head = "flex items-center border-r border-[#a9a9a9] bg-[#fff6da] pl-[5px]";
    const box = "flex min-w-0 items-center border-r border-[#a9a9a9]";
    return (
        <div role="dialog" aria-label="입원 오더" className="absolute left-1/2 top-[320px] z-10 w-[836px] -translate-x-1/2 border border-[#666] bg-white pb-1 shadow-[0_4px_18px_rgba(0,0,0,0.4)]">
            <div className="flex h-[29px] items-center gap-1.5 pl-2 pr-1.5">
                <svg width="16" height="12" viewBox="0 0 16 12"><rect x="0.5" y="0.5" width="14" height="11" fill="#e4eef2" stroke="#889" /><path d="M3.500 3v6M6.500 5v4" stroke="#2c9dc4" strokeWidth="2" /><path d="M9 4v5M11.500 3v6" stroke="#d24a3e" strokeWidth="1.500" /></svg>
                <span className="flex gap-1.5"><span>입원</span><span>오더</span></span>
                <button aria-label="창 닫기" className="ml-auto"><X className="h-[18px] w-[18px]" strokeWidth={1.5} /></button>
            </div>
            <div className="relative mx-[10px] mt-[11px] flex h-[34px] items-center gap-1 rounded-sm border border-[#b5c9e2] bg-[#cfd9e5] pl-[11px]">
                <span>1</span><span>무명자</span><span>M/40</span>
                <button className="ml-auto mr-[9px] h-[26px] w-[81px] border-2 border-[#ed1c24] bg-[#fafafa] text-[#24497c]">병실현황</button>
                <Marker n={6} place="right-[78px] -top-[24px]" />
            </div>
            <div className="relative mx-1.5 mt-1.5 border-2 border-[#ed1c24] p-0.5">
                <Marker n={2} place="-left-[18px] -top-[22px]" />
                <div className="rounded-sm border border-[#a9a9a9]">
                    <div className="flex h-8 items-center gap-2 border-b border-[#a9a9a9] bg-linear-to-b from-white to-[#ececec] pl-[5px]"><span>입원</span><span>오더</span></div>
                    <div className={row}>
                        <label htmlFor="plan-date" className={head}>입원예정일자</label>
                        <div className={`${box} pl-1 pr-2.5`}>
                            <input id="plan-date" defaultValue="2020-12-17" className="w-full min-w-0 text-[#333] outline-none" />
                            <button aria-label="달력" className="mr-1.5 shrink-0"><DateIcon /></button>
                            <input aria-label="입원예정시각" defaultValue="11:09" className="w-9 shrink-0 outline-none" />
                        </div>
                    </div>
                    <div className={row}>
                        <label htmlFor="dept" className="flex items-center border-r border-[#a9a9a9] bg-[#f2f6fa] pl-[5px]">입원과</label>
                        <input id="dept" defaultValue="내과" className="border-r border-[#a9a9a9] pl-[5px]" />
                        <label htmlFor="doctor" className={head}>담당의사</label>
                        <div className={box}><SelectBox id="doctor" value="김지훈" border={false} /></div>
                        <label htmlFor="attending" className={head}>주치의</label>
                        <div className="flex"><SelectBox id="attending" border={false} /></div>
                    </div>
                    <div className={row}>
                        <label htmlFor="charge" className={head}>입원담당</label>
                        <div className={box}>
                            <input id="charge" className="w-full min-w-0 outline-none" />
                            <button aria-label="담당 검색" className="mr-1"><Lens /></button>
                        </div>
                    </div>
                    <div className={row}>
                        <label htmlFor="kind" className={head}>입원유형</label>
                        <div className={box}><SelectBox id="kind" value="일반" border={false} /></div>
                    </div>
                    <div className={row}>
                        <label htmlFor="route" className={head}>입원경로</label>
                        <div className={box}><SelectBox id="route" border={false} /></div>
                        <label htmlFor="arrive" className={head}>도착경로</label>
                        <div className={box}><SelectBox id="arrive" border={false} /></div>
                        <label htmlFor="state" className={head}>도착상태</label>
                        <div className="flex"><SelectBox id="state" border={false} /></div>
                    </div>
                    <div className="flex h-[108px]">
                        <label htmlFor="memo" className={`${head} w-[100px]`}>입원메모</label>
                        <textarea id="memo" className="flex-1 resize-none p-1 outline-none" />
                    </div>
                </div>
            </div>
            <div className="relative mx-1.5 mt-px flex items-center">
                <button className="h-[30px] w-20 border-2 border-[#ed1c24] p-0.5 text-white"><span className="flex h-full items-center justify-center rounded-[3px] bg-linear-to-b from-[#c96b86] to-[#b04f6c]">삭제</span></button>
                <Marker n={4} place="left-20 -top-[2px]" />
                <Marker n={5} place="right-[228px] -top-[2px]" />
                <button className="ml-auto h-[26px] w-[70px] border-2 border-[#ed1c24] bg-[#fafafa] text-[#24497c]">입원등록</button>
                <button className="ml-1 h-7 w-[72px] border-2 border-[#ed1c24] bg-linear-to-b from-[#7099c0] to-[#4a729e] text-white">저장</button>
                <Marker n={3} place="right-[41px] -top-[5px]" />
                <PlainButton className="ml-1 mr-1 h-6 w-[71px]">닫기</PlainButton>
            </div>
        </div>
    );
}

export default function App() {
    return (
        <div className="relative flex min-h-screen flex-col bg-white font-['Liberation_Sans','Noto_Sans_CJK_KR',sans-serif] text-[13px] leading-5 text-black">
            <TitleBar />
            <div className="flex flex-1">
                <Sidebar />
                <main className="flex min-w-0 flex-1 flex-col">
                    <PatientBar />
                    <StatusRow />
                    <div className="flex flex-1 flex-col px-[3px] pb-[3px] pt-[3px]">
                        <div className="flex gap-[3px]">
                            <div className="flex w-[801px] shrink-0 flex-col gap-[5px]">
                                <div className="flex gap-[5px]">
                                    <BasicInfo />
                                    <MedicalInfo />
                                </div>
                                <div className="flex gap-[3px]">
                                    <Calendar month={NOVEMBER} />
                                    <Calendar month={DECEMBER} />
                                    <Memos />
                                </div>
                                <Notices />
                            </div>
                            <div className="flex min-w-0 flex-1 flex-col">
                                <History />
                                <div className="my-px h-[3px] bg-[#d0d0d0]" />
                                <Claims />
                            </div>
                        </div>
                        <OrderList />
                    </div>
                    <ActionBar />
                </main>
            </div>
            <StatusBar />
            <OrderDialog />
        </div>
    );
}
